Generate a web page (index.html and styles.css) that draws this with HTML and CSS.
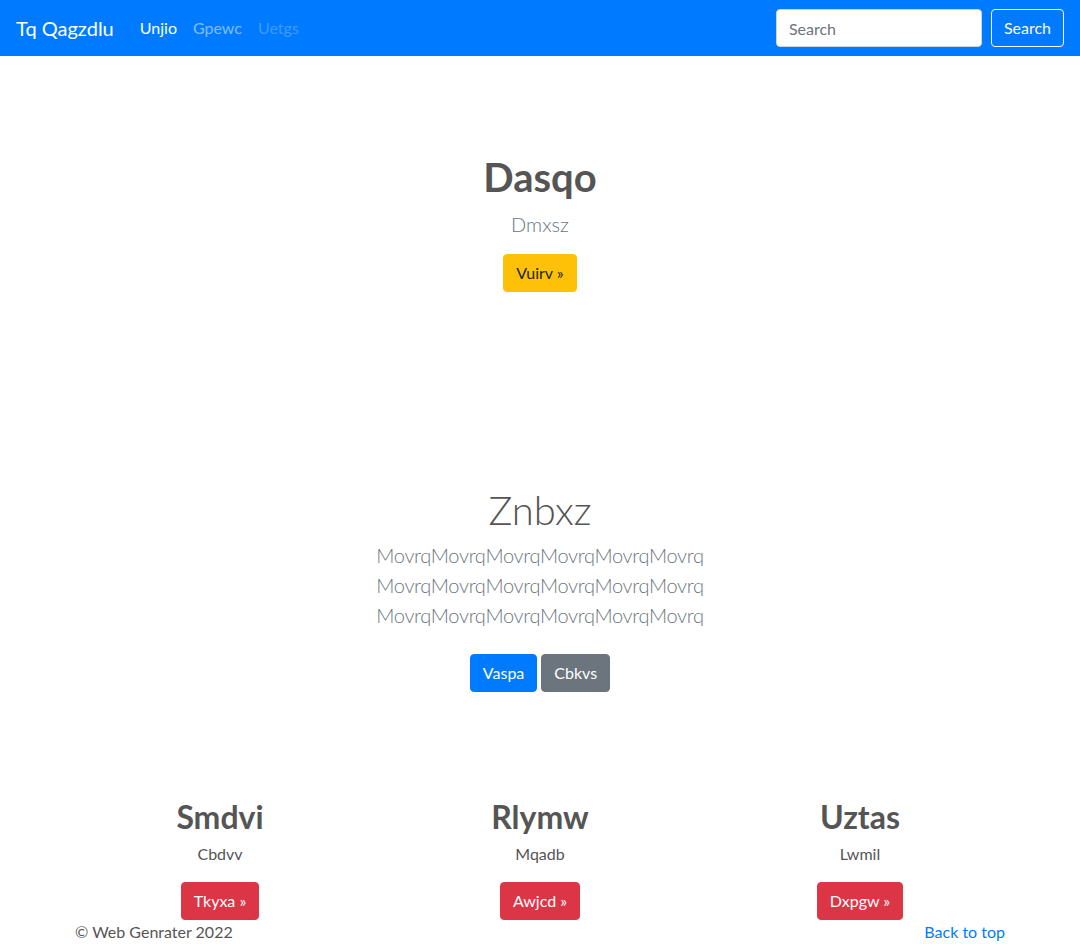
FILE: index.html
```html
<!DOCTYPE html>
<html lang="en">
<head>
<meta charset="utf-8">
<title>Tq Qagzdlu</title>
<link rel="stylesheet" href="styles.css">
</head>
<body>
<nav class="navbar">
  <a class="brand" href="#">Tq Qagzdlu</a>
  <ul class="nav">
    <li><a class="nav-link active" href="#">Unjio</a></li>
    <li><a class="nav-link" href="#">Gpewc</a></li>
    <li><a class="nav-link disabled" href="#">Uetgs</a></li>
  </ul>
  <form class="search">
    <input class="search-input" type="text" placeholder="Search">
    <button class="btn btn-outline-light" type="button">Search</button>
  </form>
</nav>
<main>
  <section class="hero">
    <h1 class="hero-title">Dasqo</h1>
    <p class="lead hero-lead">Dmxsz</p>
    <p class="hero-actions"><a class="btn btn-warning" href="#">Vuirv »</a></p>
  </section>
  <section class="intro">
    <h1 class="intro-title">Znbxz</h1>
    <p class="lead intro-lead">MovrqMovrqMovrqMovrqMovrqMovrq<br>MovrqMovrqMovrqMovrqMovrqMovrq<br>MovrqMovrqMovrqMovrqMovrqMovrq</p>
    <p class="intro-actions"><a class="btn btn-primary" href="#">Vaspa</a><a class="btn btn-secondary" href="#">Cbkvs</a></p>
  </section>
  <section class="container cols">
    <div class="col">
      <h2 class="col-title">Smdvi</h2>
      <p class="col-text">Cbdvv</p>
      <p class="col-actions"><a class="btn btn-danger" href="#">Tkyxa »</a></p>
    </div>
    <div class="col">
      <h2 class="col-title">Rlymw</h2>
      <p class="col-text">Mqadb</p>
      <p class="col-actions"><a class="btn btn-danger" href="#">Awjcd »</a></p>
    </div>
    <div class="col">
      <h2 class="col-title">Uztas</h2>
      <p class="col-text">Lwmil</p>
      <p class="col-actions"><a class="btn btn-danger" href="#">Dxpgw »</a></p>
    </div>
  </section>
</main>
<footer class="container footer">
  <p class="copy">© Web Genrater 2022</p>
  <p class="totop"><a href="#">Back to top</a></p>
</footer>
</body>
</html>
```
FILE: styles.css
```css
* { box-sizing: border-box; }
html, body { margin: 0; padding: 0; }
body {
  font-family: "Lato", "Open Sans", sans-serif;
  font-size: 16px;
  line-height: 1.5;
  color: #555;
  background: #fff;
  overflow: hidden;
}
a { text-decoration: none; }
p { margin: 0; }
h1, h2 { margin: 0; line-height: 1.2; }

.navbar {
  height: 56px;
  background: #007bff;
  display: flex;
  align-items: center;
  padding: 0 16px;
}
.brand {
  color: #fff;
  font-size: 20px;
  line-height: 30px;
  margin-right: 18px;
}
.nav {
  list-style: none;
  margin: 0;
  padding: 0;
  display: flex;
  flex: 1;
}
.nav-link {
  display: block;
  padding: 8px;
  color: rgba(255,255,255,.5);
}
.nav-link.active { color: #fff; }
.nav-link.disabled { color: rgba(255,255,255,.25); }
.search { display: flex; align-items: center; gap: 9px; }
.search-input {
  width: 206px;
  height: 38px;
  padding: 6px 12px;
  font: inherit;
  color: #495057;
  border: 1px solid #ced4da;
  border-radius: 4px;
  background: #fff;
  outline: none;
}
.search-input::placeholder { color: #6c757d; }

.btn {
  display: inline-block;
  padding: 6px 12px;
  font: inherit;
  font-size: 16px;
  line-height: 24px;
  border: 1px solid transparent;
  border-radius: 4px;
  text-align: center;
  cursor: pointer;
}
.btn-outline-light { color: #f8f9fa; border-color: #f8f9fa; background: transparent; }
.btn-warning { background: #ffc107; border-color: #ffc107; color: #212529; }
.btn-primary { background: #007bff; border-color: #007bff; color: #fff; }
.btn-secondary { background: #6c757d; border-color: #6c757d; color: #fff; }
.btn-danger { background: #dc3545; border-color: #dc3545; color: #fff; }

.lead { font-size: 20px; font-weight: 300; line-height: 30px; color: #6c757d; }

.hero { text-align: center; padding-top: 97px; }
.hero-title { font-size: 40px; font-weight: 700; margin-bottom: 8px; }
.hero-lead { margin-bottom: 15px; }

.intro { text-align: center; margin-top: 194px; }
.intro-title { font-size: 40px; font-weight: 300; margin-bottom: 6px; }
.intro-lead { margin-bottom: 24px; letter-spacing: -0.33px; }
.intro-actions { display: flex; justify-content: center; gap: 4px; }

.container { width: 960px; margin: 0 auto; padding: 0 15px; }
.cols { display: flex; margin-top: 106px; padding: 0; }
.col { flex: 1; padding: 0 15px; text-align: center; }
.col-title { font-size: 32px; font-weight: 700; margin-bottom: 6px; }
.col-text { margin-bottom: 16px; }

.footer { display: flex; justify-content: space-between; }
.totop a { color: #007bff; }
```
